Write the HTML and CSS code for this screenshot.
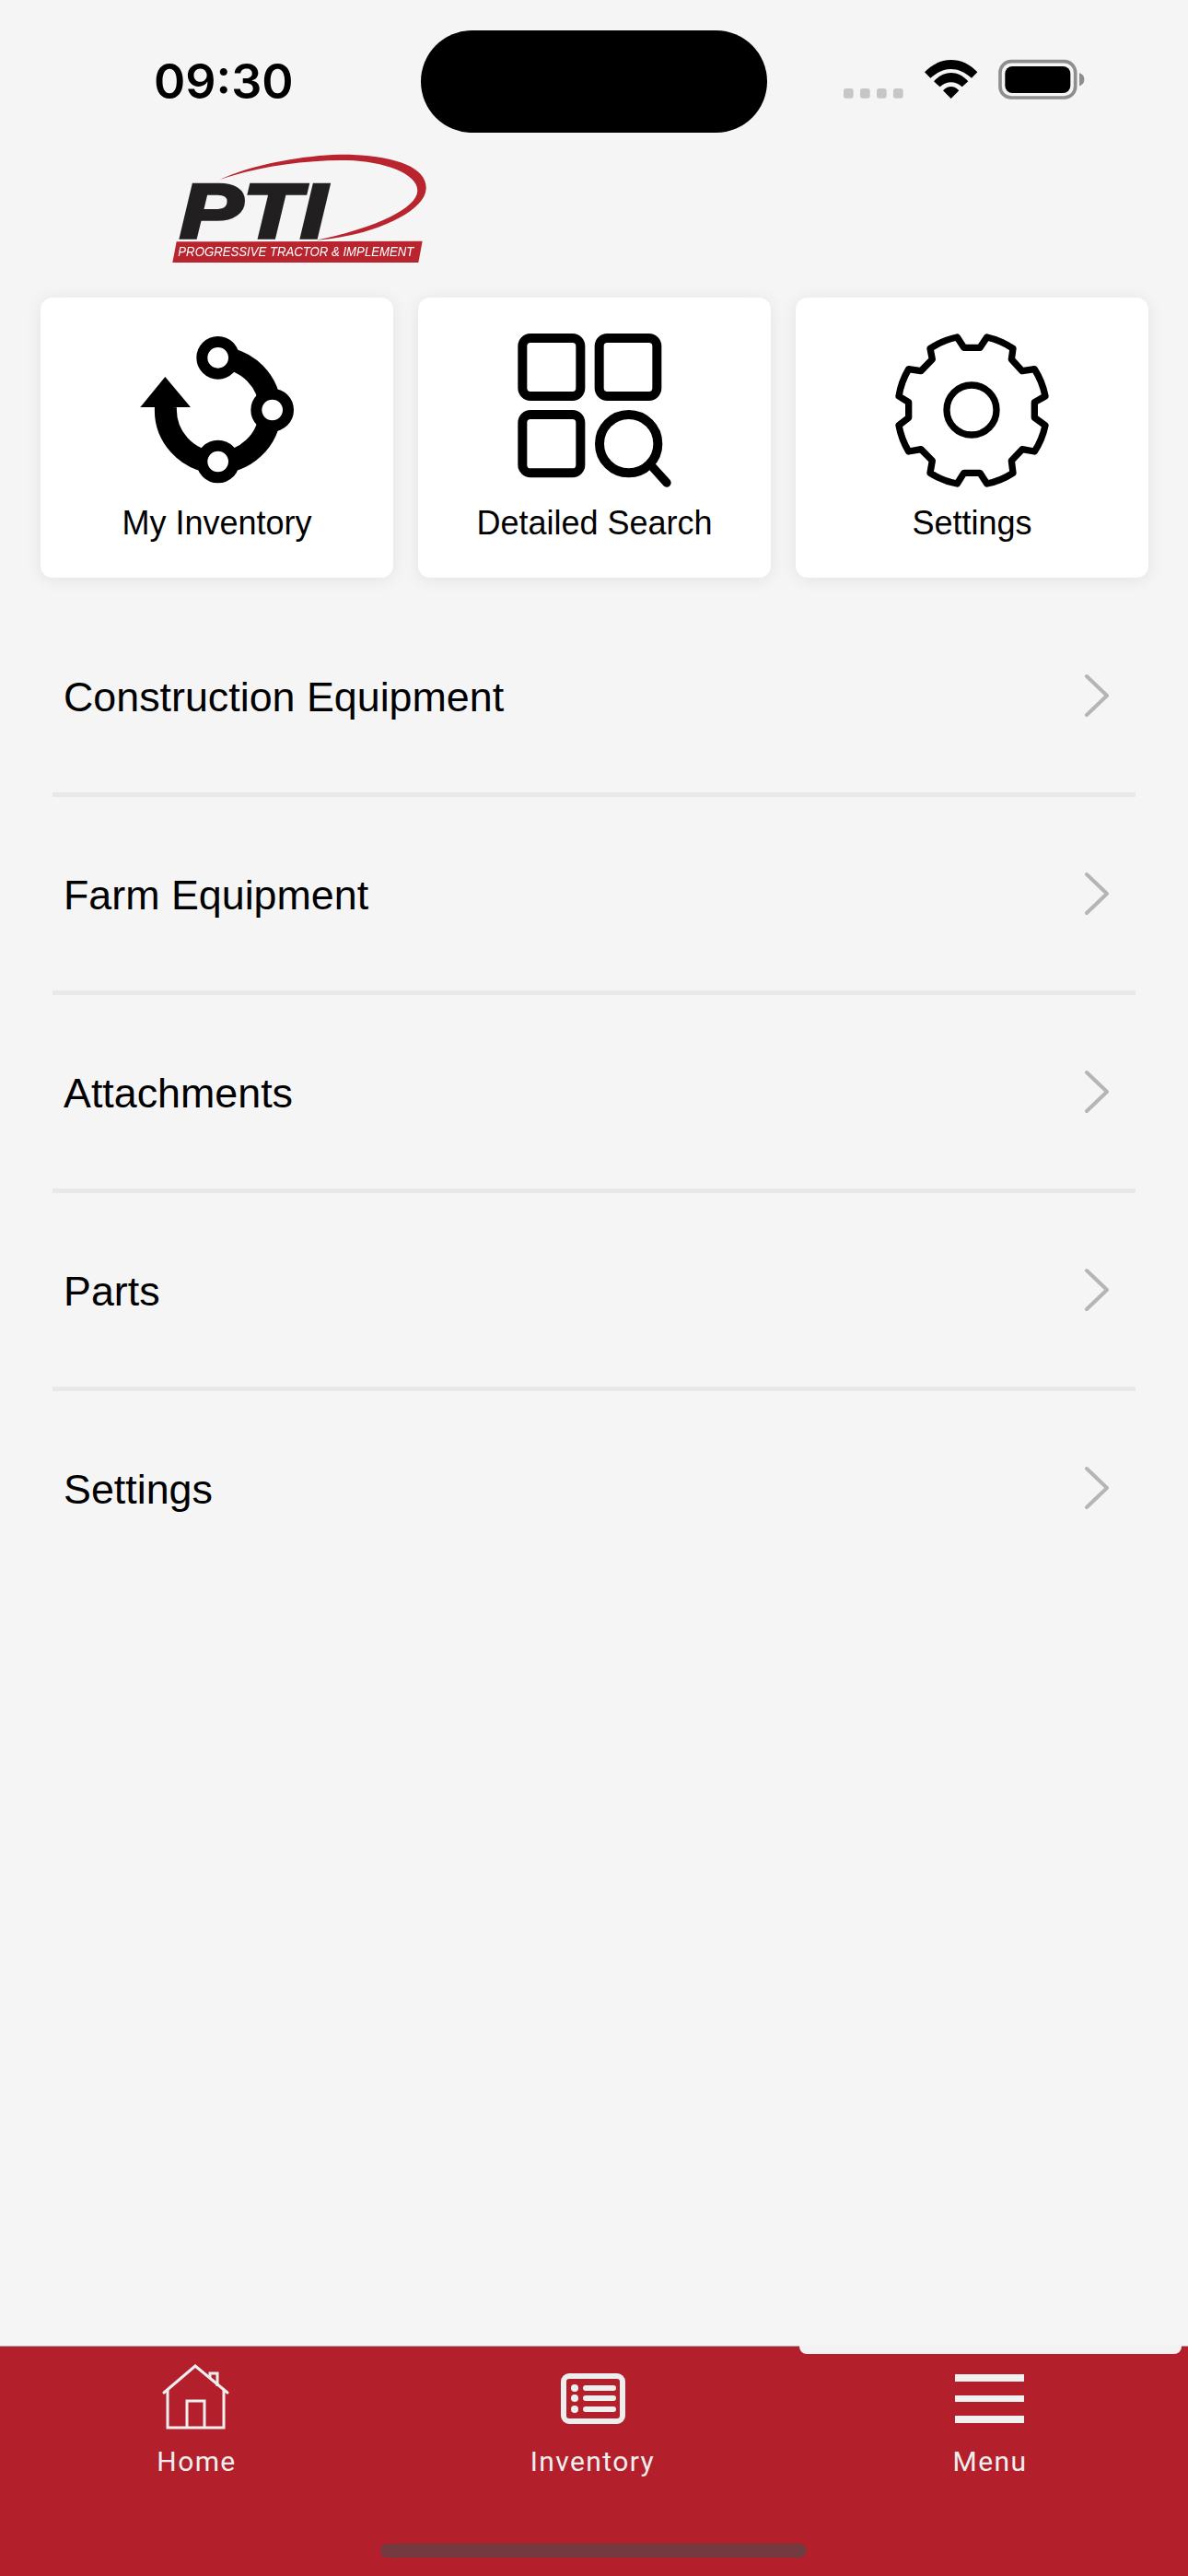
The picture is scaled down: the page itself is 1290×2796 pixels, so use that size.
FILE: index.html
```html
<!DOCTYPE html>
<html lang="en">
<head>
    <meta charset="UTF-8">
    <meta name="viewport" content="width=device-width, initial-scale=1.0">
    <title>PTI Home</title>
    <link rel="stylesheet" href="styles.css">
</head>
<body>

    <header class="status-bar">
        <div class="time">09:30</div>
        <div class="island"></div>
        <svg class="status-icons" viewBox="48 120 792 156">
            <rect x="48" y="228" width="32" height="32" rx="8" fill="#c6c6c6"/>
            <rect x="102" y="228" width="32" height="32" rx="8" fill="#c6c6c6"/>
            <rect x="156" y="228" width="32" height="32" rx="8" fill="#c6c6c6"/>
            <rect x="210" y="228" width="32" height="32" rx="8" fill="#c6c6c6"/>
            <path d="M312 175 C360 122 436 122 484 175 L465 194 C420 155 376 155 331 194 Z"/>
            <path d="M342 205 C375 168 421 168 454 205 L434 223 C412 203 384 203 362 223 Z"/>
            <path d="M372 235 C387 218 409 218 424 235 L398 261 Z"/>
            <rect x="558" y="140" width="245" height="118" rx="36" fill="none" stroke="#8e8e8e" stroke-width="11"/>
            <rect x="574" y="156" width="213" height="87" rx="24"/>
            <path d="M816 178 C828 182 832 190 832 199 C832 208 828 216 816 220 Z" fill="#8e8e8e"/>
        </svg>
    </header>

    <svg class="logo" viewBox="0 0 930 450">
        <path d="M205 135 C330 78 520 50 640 54 C790 60 882 100 878 165 C875 240 700 320 520 332 C680 300 850 235 850 170 C850 115 740 75 620 72 C480 70 320 95 205 135 Z" fill="#b9252f"/>
        <text class="logo-name" x="76" y="325" textLength="478" lengthAdjust="spacingAndGlyphs">PTI</text>
        <polygon points="65,337 866,335 853,405 52,405" fill="#b9252f"/>
        <text class="logo-tag" x="70" y="384" textLength="768" lengthAdjust="spacingAndGlyphs">PROGRESSIVE TRACTOR &amp; IMPLEMENT</text>
    </svg>

    <section class="cards">
        <div class="card">
            <svg class="card-icon" viewBox="330 135 573 540">
                <path d="M450 395 A170 170 0 1 0 620 235" fill="none" stroke="#000" stroke-width="72"/>
                <polygon points="367,396 448,297 531,396"/>
                <circle cx="620" cy="235" r="52" fill="#fff" stroke="#000" stroke-width="36"/>
                <circle cx="797" cy="405" r="52" fill="#fff" stroke="#000" stroke-width="36"/>
                <circle cx="620" cy="573" r="52" fill="#fff" stroke="#000" stroke-width="36"/>
            </svg>
            <span>My Inventory</span>
        </div>
        <div class="card">
            <svg class="card-icon" viewBox="330 135 573 540" fill="none" stroke="#000" stroke-width="30">
                <rect x="382" y="171" width="189" height="189" rx="26"/>
                <rect x="632" y="171" width="188" height="189" rx="26"/>
                <rect x="382" y="420" width="189" height="190" rx="26"/>
                <circle cx="728" cy="515" r="95"/>
                <path d="M805 590 L852 642" stroke-width="28" stroke-linecap="round"/>
            </svg>
            <span>Detailed Search</span>
        </div>
        <div class="card">
            <svg class="card-icon" viewBox="330 135 573 540" fill="none" stroke="#000" stroke-width="22" stroke-linejoin="round">
                <path d="M590 202 L642 202 L665 168 A250 250 0 0 1 750 205 L745 240 L780 278 L820 272 A250 250 0 0 1 855 360 L820 380 L820 430 L855 455 A250 250 0 0 1 820 540 L780 533 L745 570 L750 610 A250 250 0 0 1 665 645 L642 610 L590 610 L568 645 A250 250 0 0 1 480 610 L487 570 L450 533 L410 540 A250 250 0 0 1 378 455 L410 430 L410 380 L378 360 A250 250 0 0 1 410 272 L450 278 L487 240 L480 205 A250 250 0 0 1 568 168 Z"/>
                <circle cx="615" cy="405" r="81"/>
            </svg>
            <span>Settings</span>
        </div>
    </section>

    <main class="menu-list">
        <div class="menu-row">
            <span>Construction Equipment</span>
            <svg class="chevron" viewBox="0 0 30 48"><polyline points="3,3 25,24 3,45"/></svg>
        </div>
        <div class="menu-row">
            <span>Farm Equipment</span>
            <svg class="chevron" viewBox="0 0 30 48"><polyline points="3,3 25,24 3,45"/></svg>
        </div>
        <div class="menu-row">
            <span>Attachments</span>
            <svg class="chevron" viewBox="0 0 30 48"><polyline points="3,3 25,24 3,45"/></svg>
        </div>
        <div class="menu-row">
            <span>Parts</span>
            <svg class="chevron" viewBox="0 0 30 48"><polyline points="3,3 25,24 3,45"/></svg>
        </div>
        <div class="menu-row">
            <span>Settings</span>
            <svg class="chevron" viewBox="0 0 30 48"><polyline points="3,3 25,24 3,45"/></svg>
        </div>
    </main>

    <nav class="tab-bar">
        <div class="active-tab"></div>
        <div class="tabs">
            <div class="tab">
                <svg class="tab-icon" viewBox="0 0 80 76" fill="none" stroke="#eeeeee" stroke-width="3">
                    <path d="M3 32 L37 3 L72 32" stroke-linecap="round"/>
                    <path d="M7 29 V70 H68 V29"/>
                    <path d="M28 70 V41 H47 V70"/>
                    <path d="M53 17 V11 H61 V25"/>
                </svg>
                <span class="tab-label-left">Home</span>
            </div>
            <div class="tab">
                <svg class="tab-icon" viewBox="0 0 80 76" fill="none" stroke="#eeeeee" stroke-width="6">
                    <rect x="7" y="14" width="64" height="49" rx="6"/>
                    <path d="M31 27 H61 M31 38 H61 M31 50 H61" stroke-linecap="round"/>
                    <circle cx="19" cy="27" r="4" fill="#eeeeee" stroke="none"/>
                    <circle cx="19" cy="38" r="4" fill="#eeeeee" stroke="none"/>
                    <circle cx="19" cy="50" r="4" fill="#eeeeee" stroke="none"/>
                </svg>
                <span class="tab-label-left">Inventory</span>
            </div>
            <div class="tab">
                <svg class="tab-icon" viewBox="0 0 80 76" fill="#f1f1f1">
                    <rect x="2" y="12" width="75" height="8"/>
                    <rect x="2" y="35" width="75" height="7"/>
                    <rect x="2" y="57" width="75" height="8"/>
                </svg>
                <span>Menu</span>
            </div>
        </div>
        <div class="home-indicator"></div>
    </nav>

</body>
</html>
```

FILE: styles.css
```css
body {
    margin: 0;
    width: 1290px;
    height: 2796px;
    overflow: hidden;
    display: flex;
    flex-direction: column;
    background-color: #f5f5f5;
    font-family: 'Liberation Sans', Arial, sans-serif;
    color: #000;
}

.status-bar {
    display: flex;
    align-items: flex-start;
    height: 117px;
    padding: 33px 0 0 167px;
}

.time {
    width: 290px;
    margin-top: 24px;
    font-family: Inter, sans-serif;
    font-size: 52px;
    font-weight: 600;
    line-height: 64px;
}

.island {
    width: 376px;
    height: 111px;
    border-radius: 56px;
    background-color: #000;
}

.status-icons {
    width: 264px;
    height: 52px;
    margin: 27px 0 0 83px;
}

.logo {
    display: block;
    width: 310px;
    height: 150px;
    margin-left: 170px;
    filter: blur(0.6px);
}

.logo-name {
    font-family: 'Liberation Sans', sans-serif;
    font-size: 250px;
    font-weight: bold;
    font-style: italic;
    fill: #221f20;
    stroke: #221f20;
    stroke-width: 11px;
}

.logo-tag {
    font-family: 'Liberation Sans', sans-serif;
    font-size: 42px;
    font-style: italic;
    fill: #fff;
}

.cards {
    display: grid;
    grid-template-columns: repeat(3, 383px);
    gap: 27px;
    margin: 23px 0 0 44px;
}

.card {
    display: flex;
    flex-direction: column;
    align-items: center;
    height: 304px;
    padding-top: 32px;
    box-sizing: border-box;
    background-color: #fff;
    border-radius: 13px;
    box-shadow: 0 2px 18px rgba(0, 0, 0, 0.08);
    font-size: 36px;
    line-height: 40px;
}

.card-icon {
    display: block;
    width: 191px;
    height: 180px;
    margin-bottom: 13px;
}

.menu-list {
    flex: 1;
    margin: 23px 57px 0;
}

.menu-row {
    display: flex;
    align-items: center;
    justify-content: space-between;
    height: 210px;
    padding: 0 26px 0 12px;
    border-bottom: 5px solid #e8e8e8;
    font-size: 44.8px;
}

.menu-row span {
    margin-top: 3px;
}

.menu-row:last-child {
    border-bottom: none;
}

.chevron {
    width: 30px;
    height: 48px;
}

.chevron polyline {
    fill: none;
    stroke: #b5b5b5;
    stroke-width: 4;
    stroke-linecap: round;
    stroke-linejoin: round;
}

.tab-bar {
    position: relative;
    height: 249px;
    border-top: 1px solid #a9a9a9;
    background-color: #b3202c;
}

.active-tab {
    position: absolute;
    top: -1px;
    left: 868px;
    width: 415px;
    height: 9px;
    background-color: #f2f2f2;
    border-radius: 0 0 8px 8px;
}

.tabs {
    display: grid;
    grid-template-columns: repeat(3, 430px);
    padding-top: 18px;
}

.tab {
    display: flex;
    flex-direction: column;
    align-items: center;
    color: #eeeeee;
    font-family: Roboto, sans-serif;
    font-size: 30px;
    line-height: 36px;
    letter-spacing: 1.4px;
}

.tab-label-left {
    margin-right: 3px;
}

.tab-icon {
    display: block;
    width: 80px;
    height: 76px;
    margin-bottom: 13px;
}

.home-indicator {
    width: 463px;
    height: 15px;
    margin: 71px 0 0 413px;
    border-radius: 8px;
    background-color: #733a3f;
}
```
